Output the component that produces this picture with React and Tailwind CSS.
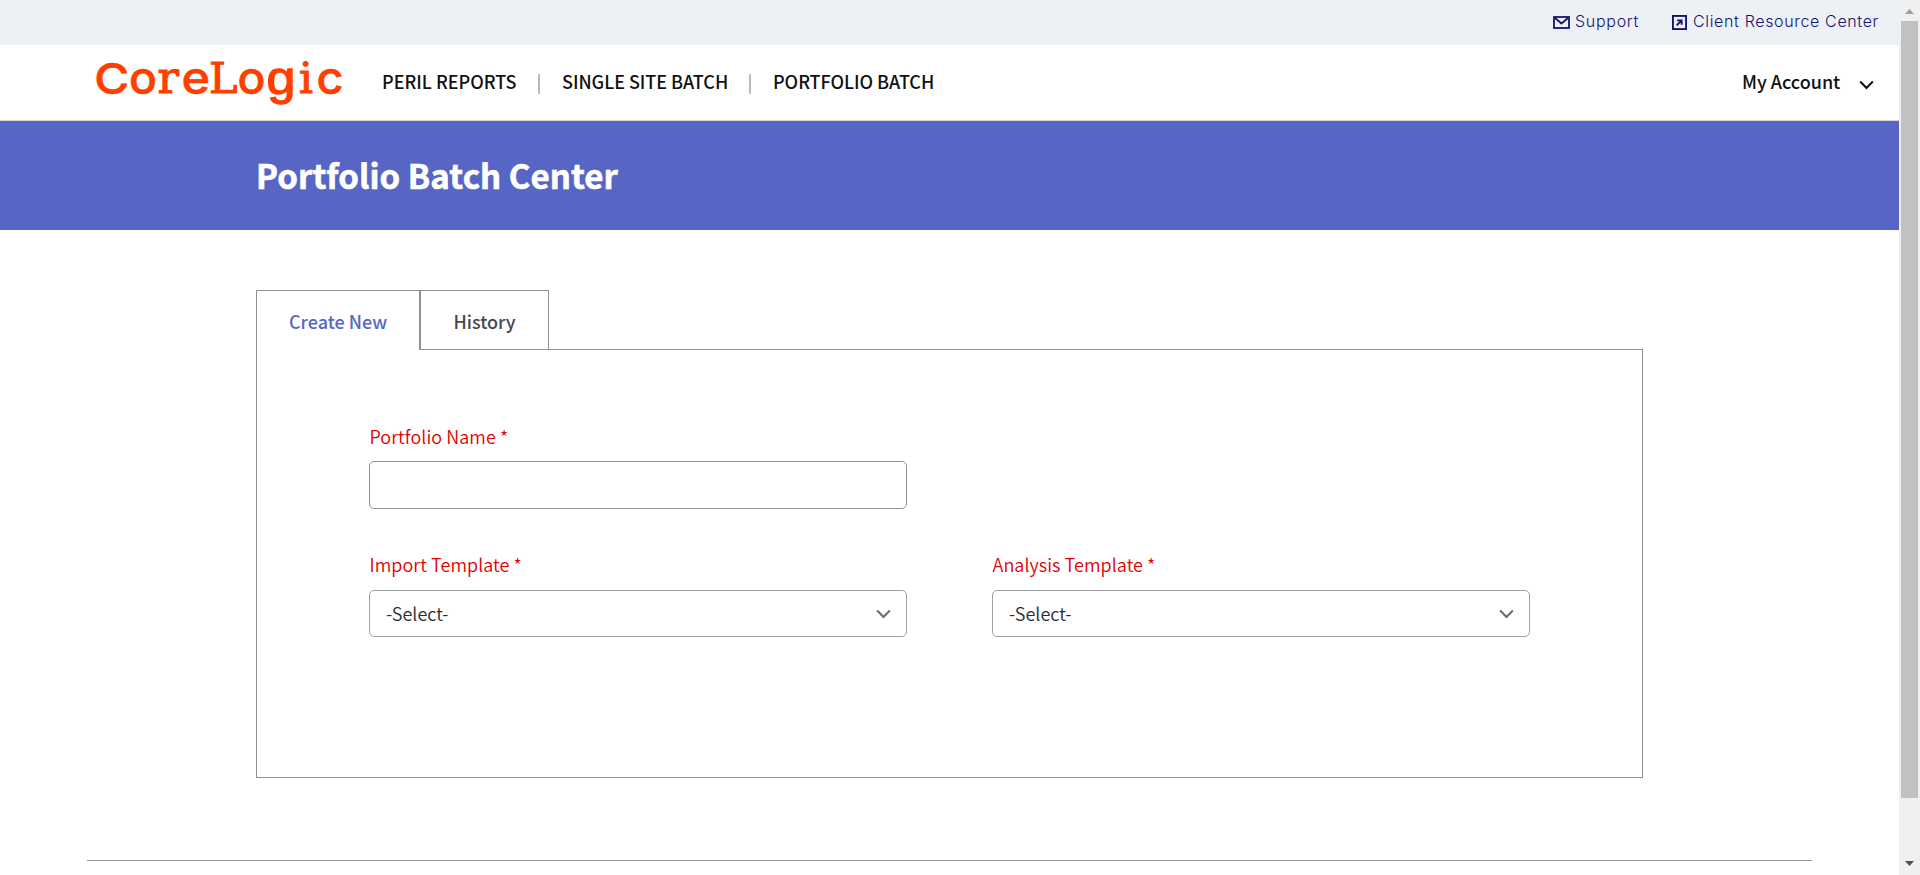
import React from "react";

const SANS = "font-['Noto_Sans_CJK_SC','Open_Sans',sans-serif]";

function Logo() {
  return (
    <svg className="overflow-visible" width="254" height="70" viewBox="-4 -8 254 70" fill="#ff3f00" stroke="#ff3f00" strokeWidth="0.6" role="img" aria-label="CoreLogic">
      <g fontFamily="Inter, sans-serif" fontWeight="500">
        <text transform="translate(-2.700 38.500) scale(1.11 1)" fontSize="43">C</text>
        <text transform="translate(32 38.500) scale(1.03 1)" fontSize="45">o</text>
        <text transform="translate(84.500 38.500) scale(1.08 1)" fontSize="45">e</text>
        <text transform="translate(140.500 38.500) scale(1.03 1)" fontSize="45">o</text>
        <text transform="translate(219.500 38.500) scale(1.04 1)" fontSize="45">c</text>
      </g>
      <g fontFamily="Liberation Mono, monospace" strokeWidth="1.3">
        <text transform="translate(168 38.500) scale(1.12 0.97)" fontSize="47">g</text>
      </g>
      <g fontFamily="DejaVu Serif, serif" strokeWidth="1.1">
        <text transform="translate(60.500 38)" fontSize="45">r</text>
        <text transform="translate(112 38)" fontSize="43">L</text>
        <text transform="translate(202 38) scale(1.02 1)" fontSize="43">i</text>
      </g>
    </svg>
  );
}

function Chevron({ className }) {
  return (
    <svg className={className} width="15" height="10" viewBox="0 0 15 10" fill="none" stroke="currentColor" strokeWidth="2">
      <path d="M1.2 1.5 7.5 8l6.3-6.5" />
    </svg>
  );
}

function TopBar() {
  return (
    <div className="flex h-[45px] items-center justify-end bg-[#edf1f5] pb-[3px] pr-5 font-['Inter','Lato',sans-serif] text-[16px] font-light text-[#14146e]">
      <a className="flex items-center">
        <svg className="mr-[5px] mt-[3px]" width="17" height="13" viewBox="0 0 17 13" fill="none" stroke="currentColor" strokeWidth="1.8">
          <rect x="1" y="1" width="15" height="11" />
          <path d="M2 2l6.500 5.500L15 2" />
        </svg>
        <span className="leading-5 tracking-[0.7px]">Support</span>
      </a>
      <a className="ml-[33px] flex items-center">
        <svg className="mr-[6px] mt-[3px]" width="15" height="15" viewBox="0 0 16 16" fill="none" stroke="currentColor" strokeWidth="2">
          <rect x="1" y="1" width="14" height="14" />
          <path d="M5 11l5-5M5.500 5.700H10.300V10.500" />
        </svg>
        <span className="leading-5 tracking-[0.65px]">Client Resource Center</span>
      </a>
    </div>
  );
}

function Header() {
  return (
    <header className={`flex h-[76px] border-b border-[#d5d5d5] bg-white pl-[93px] pr-[25px] text-[18px] font-medium text-[#111] ${SANS}`}>
      <div className="pt-[2px]"><Logo /></div>
      <nav className="ml-[35px] flex h-[75px] items-center">
        <span className="w-[134px] whitespace-nowrap pb-[2px]">PERIL REPORTS</span>
        <span className="ml-[22px] mr-[22px] mt-[3px] h-5 w-[2px] bg-[#bbb7bc]" />
        <span className="w-[166px] whitespace-nowrap pb-[2px] tracking-[-0.05px]">SINGLE SITE BATCH</span>
        <span className="ml-[21px] mr-[22px] mt-[3px] h-5 w-[2px] bg-[#bbb7bc]" />
        <span className="whitespace-nowrap pb-[2px] tracking-[-0.05px]">PORTFOLIO BATCH</span>
      </nav>
      <div className="ml-auto flex h-[75px] items-center">
        <span className="w-[100px] whitespace-nowrap pb-[2px]">My Account</span>
        <Chevron className="ml-[17px] mt-[5px]" />
      </div>
    </header>
  );
}

function SelectField({ label }) {
  return (
    <div className="w-[538px]">
      <label className="flex h-6 items-center pb-px pl-[0.5px] text-[18px] font-[350] tracking-[0.06px] text-[#e00000]">{label} *</label>
      <div className="mt-[13px] flex h-[47px] items-center justify-between rounded-[5px] border border-[#a0a0a0] pl-4 pr-[15px]">
        <span className="pb-px text-[18px] font-[350] text-[#2b2b33]">-Select-</span>
        <Chevron className="text-[#6b6b6b]" />
      </div>
    </div>
  );
}

function Scrollbar() {
  return (
    <div className="flex w-[21px] flex-col items-center bg-[#f0f0f0]">
      <svg className="mt-[9px] shrink-0" width="9" height="5" viewBox="0 0 9 5"><path d="M0 5 4.500 0 9 5z" fill="#a0a0a0" /></svg>
      <div className="mt-[7px] h-[777px] w-[17px] bg-[#c1c1c1]" />
      <svg className="mb-[9px] mt-auto shrink-0" width="9" height="5" viewBox="0 0 9 5"><path d="M0 0 4.500 5 9 0z" fill="#505050" /></svg>
    </div>
  );
}

export default function App() {
  return (
    <div className="flex h-[875px] w-[1920px] overflow-hidden bg-white">
      <div className="w-[1899px]">
        <TopBar />
        <Header />
        <div className={`flex h-[109px] items-center bg-[#5766c5] pl-64 text-[33px] font-bold text-white ${SANS}`}>
          <h1 className="tracking-[0.06px] [-webkit-text-stroke:0.6px_white]">Portfolio Batch Center</h1>
        </div>
        <main className={`ml-64 mt-[60px] w-[1387px] ${SANS}`}>
          <div className="flex h-[60px] text-[18px] font-medium">
            <div className="flex w-[163px] items-center justify-center border-l border-t border-[#919191] pt-[2px] text-[#5766c5]">Create New</div>
            <div className="flex w-[130px] items-center justify-center border-b border-l-2 border-r border-t border-[#919191] pt-[3px] text-[#444750]">History</div>
            <div className="flex-1 border-b border-[#919191]" />
          </div>
          <div className="h-[428px] border border-t-0 border-[#919191] pl-28 pt-[75px]">
            <div className="w-[538px]">
              <label className="flex h-6 items-center pb-[2px] pl-[0.5px] text-[18px] font-[350] tracking-[0.06px] text-[#e00000]">Portfolio Name *</label>
              <div className="mt-[12px] h-[48px] rounded-[5px] border border-[#919191]" />
            </div>
            <div className="mt-[44px] flex gap-[85px]">
              <SelectField label="Import Template" />
              <SelectField label="Analysis Template" />
            </div>
          </div>
        </main>
        <div className="ml-[87px] mt-[82px] h-px w-[1725px] bg-[#919191]" />
      </div>
      <Scrollbar />
    </div>
  );
}
